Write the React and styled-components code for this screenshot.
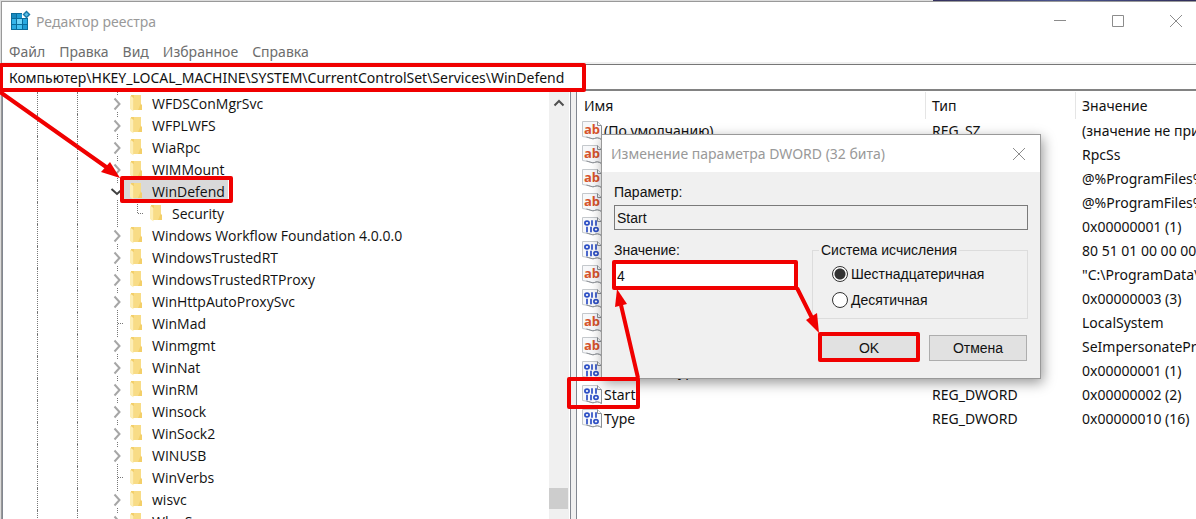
import React, { useState } from 'react'
import styled, { createGlobalStyle } from 'styled-components'

const GlobalStyle = createGlobalStyle`
  * {
    box-sizing: border-box;
  }
  body {
    margin: 0;
    overflow: hidden;
    font-family: "Noto Sans", "Open Sans", sans-serif;
    font-size: 14px;
    color: #111;
  }
`

const Desktop = styled.div`
  position: relative;
  display: flex;
  flex-direction: column;
  height: 100vh;
  padding-left: 1px;
  overflow: hidden;
  background: #dcdcdc;
`

const Behind = styled.div`
  flex: none;
  height: 1px;
  margin-left: 78%;
  background: linear-gradient(90deg, #34305c, #4b5690 50%, #2f2c58);
`

const Window = styled.div`
  flex: 1;
  min-height: 0;
  display: flex;
  flex-direction: column;
  border-top: 1px solid #999;
  border-left: 1px solid #999;
  overflow: hidden;
  background: #fff;
`

const TitleBar = styled.header`
  flex: none;
  display: flex;
  align-items: center;
  height: 38px;
  margin-right: -9px;
  padding-left: 8px;
  color: #999;
`

const Title = styled.h1`
  flex: 1;
  margin: 0 0 0 5px;
  font-size: 14px;
  font-weight: 400;
`

const CaptionButton = styled.button`
  display: flex;
  flex: none;
  align-items: center;
  justify-content: center;
  width: ${({ $width }) => $width || 58}px;
  height: 36px;
  padding: 0;
  border: 0;
  background: none;
  color: #8c8c8c;
`

const Menu = styled.nav`
  flex: none;
  display: flex;
  gap: 14px;
  height: 22px;
  padding-left: 7px;
`

const MenuItem = styled.a`
  line-height: 24px;
  color: #6d6d6d;
  text-decoration: none;
`

const AddressBar = styled.div`
  flex: none;
  padding-top: 2px;
  background: #f0f0f0;
`

const Address = styled.input`
  display: block;
  width: 100%;
  height: 27px;
  padding: 0 7px;
  border: 0;
  border-top: 1px solid #777;
  border-bottom: 2px solid #828282;
  background: #fff;
  font: inherit;
  color: #111;
  outline: none;
`

const Panes = styled.main`
  flex: 1;
  min-height: 0;
  display: flex;
`

const TreePane = styled.div`
  flex: none;
  display: flex;
  width: 569px;
  border-left: 1px solid #828790;
  border-right: 1px solid #828790;
  overflow: hidden;
`

const Tree = styled.ul`
  flex: 1;
  margin: 0;
  padding: 1px 0 0 34px;
  list-style: none;
  font-family: "Open Sans", "Noto Sans", sans-serif;
`

const TreeRow = styled.li`
  display: flex;
  height: 22px;
  white-space: nowrap;
`

const Guide = styled.span`
  flex: none;
  width: ${({ $width }) => $width}px;
  border-left: 1px dotted #777;
`

const Label = styled.span`
  display: flex;
  align-items: center;
  gap: 10px;
  padding: 0 3px 0 6px;
  background: ${({ $selected }) => ($selected ? '#d9d9d9' : 'transparent')};
`

const ScrollBar = styled.div`
  flex: none;
  display: flex;
  flex-direction: column;
  align-items: center;
  justify-content: space-between;
  width: 20px;
  margin-right: 1px;
  padding: 8px 1px 10px 0;
  background: #f0f0f0;
`

const Thumb = styled.div`
  width: 100%;
  height: 21px;
  background: #cdcdcd;
`

const Splitter = styled.div`
  flex: none;
  width: 6px;
  border-right: 1px solid #828790;
  background: #f0f0f0;
`

const ListPane = styled.div`
  flex: 1;
  min-width: 0;
  padding-top: 1px;
  overflow: hidden;
`

const Table = styled.table`
  width: 100%;
  table-layout: fixed;
  border-collapse: separate;
  border-spacing: 0;
`

const HeadCell = styled.th`
  width: ${({ $width }) => ($width ? `${$width}px` : 'auto')};
  height: 27px;
  padding: 0 0 0 ${({ $first }) => ($first ? 7 : 6)}px;
  font-weight: 400;
  text-align: left;
  &:not(:last-child) {
    border-right: 1px solid #e5e5e5;
  }
`

const Cell = styled.td`
  height: 24px;
  padding: 0 0 0 6px;
  line-height: 22px;
  white-space: nowrap;
  overflow: hidden;
`

const NameCell = styled.div`
  display: flex;
  align-items: center;
  gap: 2px;
  margin-left: -1px;
`

const Dialog = styled.section`
  position: absolute;
  left: 601px;
  top: 134px;
  width: 440px;
  border: 1px solid #999;
  background: #f0f0f0;
  box-shadow: 2px 4px 12px rgba(0, 0, 0, 0.4);
  font-family: "Liberation Sans", Arial, sans-serif;
`

const DialogTitle = styled.header`
  display: flex;
  align-items: center;
  justify-content: space-between;
  height: 37px;
  padding-left: 9px;
  background: #fff;
  color: #999;
`

const DialogName = styled.h2`
  margin: 0;
  font-family: "Noto Sans", "Open Sans", sans-serif;
  font-size: 14px;
  font-weight: 400;
`

const DialogBody = styled.form`
  padding: 10px 12px 17px;
`

const FieldLabel = styled.label`
  display: block;
  line-height: 20px;
`

const TextField = styled.input`
  display: block;
  width: 100%;
  height: ${({ readOnly }) => (readOnly ? 25 : 27)}px;
  margin-top: ${({ readOnly }) => (readOnly ? 3 : 2)}px;
  padding: 0 2px;
  border: 1px solid #7a7a7a;
  background: ${({ readOnly }) => (readOnly ? '#f0f0f0' : '#fff')};
  font: inherit;
  color: #111;
  outline: none;
`

const DialogColumns = styled.div`
  display: grid;
  grid-template-columns: 183px 216px;
  justify-content: space-between;
  margin-top: 10px;
`

const RadioGroup = styled.fieldset`
  height: 79px;
  margin: 0;
  padding: 4px 0 0 19px;
  border: 1px solid #dcdcdc;
`

const Legend = styled.legend`
  margin-left: -13px;
  padding: 0 2px;
  line-height: 20px;
`

const RadioLabel = styled.label`
  display: flex;
  align-items: center;
  gap: 3px;
  height: 20px;
  margin-bottom: 6px;
`

const Radio = styled.input`
  appearance: none;
  width: 16px;
  height: 16px;
  margin: 0;
  border: 1px solid #333;
  border-radius: 50%;
  background: #fff;
  &:checked {
    background: radial-gradient(circle, #333 5px, #fff 6px);
  }
`

const Actions = styled.div`
  display: flex;
  justify-content: flex-end;
  gap: 11px;
  margin-top: 16px;
  padding-right: 1px;
`

const Button = styled.button`
  width: 98px;
  height: 26px;
  padding: 0;
  border: 1px solid #adadad;
  background: #e1e1e1;
  font: inherit;
  color: #111;
`

const Marks = styled.svg`
  position: absolute;
  left: 0;
  top: 0;
  width: 100%;
  height: 100%;
  pointer-events: none;
`

const keys = [
  { name: 'WFDSConMgrSvc', state: 'closed' },
  { name: 'WFPLWFS', state: 'closed' },
  { name: 'WiaRpc', state: 'closed' },
  { name: 'WIMMount', state: 'closed' },
  { name: 'WinDefend', state: 'open', selected: true },
  { name: 'Security', state: 'line', child: true },
  { name: 'Windows Workflow Foundation 4.0.0.0', state: 'closed' },
  { name: 'WindowsTrustedRT', state: 'closed' },
  { name: 'WindowsTrustedRTProxy', state: 'closed' },
  { name: 'WinHttpAutoProxySvc', state: 'closed' },
  { name: 'WinMad', state: 'leaf' },
  { name: 'Winmgmt', state: 'closed' },
  { name: 'WinNat', state: 'closed' },
  { name: 'WinRM', state: 'closed' },
  { name: 'Winsock', state: 'closed' },
  { name: 'WinSock2', state: 'closed' },
  { name: 'WINUSB', state: 'closed' },
  { name: 'WinVerbs', state: 'leaf' },
  { name: 'wisvc', state: 'closed' },
  { name: 'WlanSvc', state: 'closed' },
]

const values = [
  ['(По умолчанию)', 'REG_SZ', '(значение не присвоено)'],
  ['DependOnService', 'REG_MULTI_SZ', 'RpcSs'],
  ['Description', 'REG_SZ', '@%ProgramFiles%\\Windows Defender\\MpAsDesc.dll,-240'],
  ['DisplayName', 'REG_SZ', '@%ProgramFiles%\\Windows Defender\\MpAsDesc.dll,-310'],
  ['ErrorControl', 'REG_DWORD', '0x00000001 (1)'],
  ['FailureActions', 'REG_BINARY', '80 51 01 00 00 00 00 00 00 00 00 00'],
  ['ImagePath', 'REG_EXPAND_SZ', '"C:\\ProgramData\\Microsoft\\Windows Defender"'],
  ['LaunchProtected', 'REG_DWORD', '0x00000003 (3)'],
  ['ObjectName', 'REG_SZ', 'LocalSystem'],
  ['RequiredPrivileges', 'REG_MULTI_SZ', 'SeImpersonatePrivilege SeBackupPrivilege'],
  ['ServiceSidType', 'REG_DWORD', '0x00000001 (1)'],
  ['Start', 'REG_DWORD', '0x00000002 (2)'],
  ['Type', 'REG_DWORD', '0x00000010 (16)'],
]

const AppIcon = () => (
  <svg width="21" height="22" viewBox="0 0 21 22">
    <rect x="1" y="3" width="17" height="17" fill="#0a6c9c" />
    <g fill="#2aa9e0">
      <rect x="2" y="4" width="4" height="4" fill="#1789be" />
      <rect x="7" y="4" width="5" height="4" fill="#1e9ad2" />
      <rect x="2" y="9" width="4" height="5" fill="#37b5ea" />
      <rect x="7" y="9" width="5" height="5" fill="#6fd3f7" />
      <rect x="13" y="9" width="4" height="5" />
      <rect x="2" y="15" width="4" height="4" />
      <rect x="7" y="15" width="5" height="4" fill="#45c0f0" />
      <rect x="13" y="15" width="4" height="4" fill="#1e9ad2" />
    </g>
    <path d="M12 2h7v6h-7z" fill="#fff" />
    <path d="M16.500 0.500l4 4-4 4-4-4z" fill="#1b7aa8" />
    <path d="M16.500 2.500l2 2-2 2-2-2z" fill="#58bfe9" />
  </svg>
)

const CloseIcon = () => (
  <svg width="14" height="14" viewBox="0 0 14 14" fill="none" stroke="currentColor">
    <path d="M1 1l12 12M13 1L1 13" />
  </svg>
)

const Node = ({ state }) => (
  <svg width="14" height="22" viewBox="0 0 14 22" fill="none">
    <path d="M7.500 0v22" stroke="#777" strokeDasharray="1 1" />
    {state === 'leaf' && <path d="M8 11.500h6" stroke="#777" strokeDasharray="1 1" />}
    {(state === 'closed' || state === 'open') && <path d="M0 3h14v17H0z" fill="#fff" />}
    {state === 'closed' && <path d="M4.500 6.500l5 5.500-5 5.500" stroke="#a6a6a6" strokeWidth="2" />}
    {state === 'open' && <path d="M1.500 9l5.500 5 5.500-5" stroke="#404040" strokeWidth="2" />}
  </svg>
)

const Elbow = () => (
  <svg width="20" height="22" viewBox="0 0 20 22" fill="none" stroke="#777" strokeDasharray="1 1">
    <path d="M13.500 0v11M14 11.500h9" />
  </svg>
)

const Folder = () => (
  <svg width="12" height="18" viewBox="0 0 12 18">
    <path d="M1 1h10v9l1 1v5H1z" fill="#f3cf69" />
    <path d="M4 1h7v8l-3 7H4z" fill="#f8dc86" />
    <path d="M0 1.500l3.500 2.500v13.500L0 15z" fill="#fdeeb5" />
  </svg>
)

const ValueIcon = ({ text }) => (
  <svg width="20" height="20" viewBox="0 0 20 20">
    <path d="M.5.5h15l4 4v14c-3-2-5-2-7-1s-5-1-12-2z" fill="#f7f8fa" stroke="#c4c8cc" />
    <path d="M15.500.5v4h4M19.500 5v13.500c-3-2-5-2-7-1s-5-1-8-1.500" fill="none" stroke="#8b8f94" />
    {text ? (
      <text x="2" y="13" fontFamily="Open Sans, sans-serif" fontSize="13" fontWeight="700" fill="#d6532b">ab</text>
    ) : (
      <g fill="none" stroke="#2d4fc4" strokeWidth="1.700">
        <ellipse cx="5" cy="6" rx="2.100" ry="1.900" />
        <path d="M10 3.200v5.500M14 3.200v5.500M5 9.800v5.500M9 9.800v5.500" />
        <ellipse cx="14" cy="12.500" rx="2.100" ry="1.900" />
      </g>
    )}
  </svg>
)

const isText = (type) => type.endsWith('SZ')

const App = () => {
  const [value, setValue] = useState('4')
  const [base, setBase] = useState('hex')

  return (
    <Desktop>
      <GlobalStyle />
      <Behind />
      <Window>
        <TitleBar>
          <AppIcon />
          <Title>Редактор реестра</Title>
          <CaptionButton aria-label="Свернуть">
            <svg width="12" height="12" stroke="currentColor"><path d="M0 5.500h12" /></svg>
          </CaptionButton>
          <CaptionButton aria-label="Развернуть">
            <svg width="12" height="12" fill="none" stroke="currentColor"><path d="M.5.5h11v11H.5z" /></svg>
          </CaptionButton>
          <CaptionButton aria-label="Закрыть"><CloseIcon /></CaptionButton>
        </TitleBar>
        <Menu>
          {['Файл', 'Правка', 'Вид', 'Избранное', 'Справка'].map((item) => (
            <MenuItem href="#" key={item}>{item}</MenuItem>
          ))}
        </Menu>
        <AddressBar>
          <Address
            aria-label="Адрес"
            readOnly
            value="Компьютер\HKEY_LOCAL_MACHINE\SYSTEM\CurrentControlSet\Services\WinDefend"
          />
        </AddressBar>
        <Panes>
          <TreePane>
            <Tree>
              {keys.map((key) => (
                <TreeRow key={key.name}>
                  <Guide $width={40} />
                  <Guide $width={33} />
                  <Node state={key.state} />
                  {key.child && <Elbow />}
                  <Label $selected={key.selected}>
                    <Folder />
                    {key.name}
                  </Label>
                </TreeRow>
              ))}
            </Tree>
            <ScrollBar>
              <svg width="12" height="8" fill="none" stroke="#505050" strokeWidth="2"><path d="M1.500 6.500L6 2l4.500 4.500" /></svg>
              <Thumb />
            </ScrollBar>
          </TreePane>
          <Splitter />
          <ListPane>
            <Table>
              <thead>
                <tr>
                  <HeadCell $width={349} $first>Имя</HeadCell>
                  <HeadCell $width={150}>Тип</HeadCell>
                  <HeadCell>Значение</HeadCell>
                </tr>
              </thead>
              <tbody>
                {values.map(([name, type, data]) => (
                  <tr key={name}>
                    <Cell>
                      <NameCell>
                        <ValueIcon text={isText(type)} />
                        {name}
                      </NameCell>
                    </Cell>
                    <Cell>{type}</Cell>
                    <Cell>{data}</Cell>
                  </tr>
                ))}
              </tbody>
            </Table>
          </ListPane>
        </Panes>
      </Window>

      <Dialog role="dialog" aria-labelledby="dialog-name">
        <DialogTitle>
          <DialogName id="dialog-name">Изменение параметра DWORD (32 бита)</DialogName>
          <CaptionButton $width={42} aria-label="Закрыть"><CloseIcon /></CaptionButton>
        </DialogTitle>
        <DialogBody onSubmit={(e) => e.preventDefault()}>
          <FieldLabel htmlFor="param">Параметр:</FieldLabel>
          <TextField id="param" readOnly value="Start" />
          <DialogColumns>
            <div>
              <FieldLabel htmlFor="value">Значение:</FieldLabel>
              <TextField id="value" value={value} onChange={(e) => setValue(e.target.value)} />
            </div>
            <RadioGroup>
              <Legend>Система исчисления</Legend>
              <RadioLabel>
                <Radio type="radio" name="base" checked={base === 'hex'} onChange={() => setBase('hex')} />
                Шестнадцатеричная
              </RadioLabel>
              <RadioLabel>
                <Radio type="radio" name="base" checked={base === 'dec'} onChange={() => setBase('dec')} />
                Десятичная
              </RadioLabel>
            </RadioGroup>
          </DialogColumns>
          <Actions>
            <Button type="submit">OK</Button>
            <Button type="button">Отмена</Button>
          </Actions>
        </DialogBody>
      </Dialog>

      <Marks>
        <g fill="none" stroke="#f00000" strokeWidth="4" strokeLinejoin="round">
          <rect x="1" y="65" width="583" height="25" />
          <rect x="122" y="178" width="109" height="23" />
          <rect x="614" y="262" width="182" height="26" />
          <rect x="820" y="334" width="98" height="26" />
          <rect x="569" y="379" width="69" height="28" />
          <path d="M0 92L109 169M638 378L621 305M797 288L812 318" />
        </g>
        <g fill="#f00000">
          <path d="M120 178l-19-6 9-10z" />
          <path d="M617 289l-2 18 12-3z" />
          <path d="M819 333l-13-13 11-7z" />
        </g>
      </Marks>
    </Desktop>
  )
}

export default App
